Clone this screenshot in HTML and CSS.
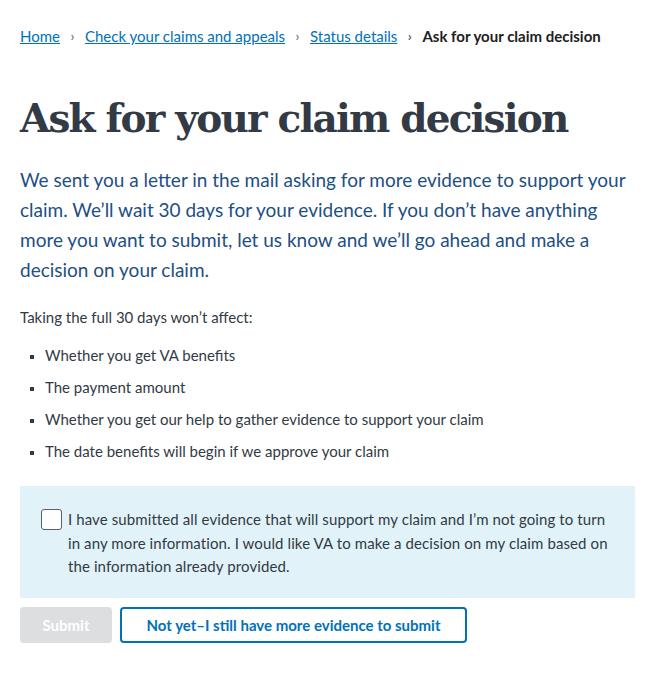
FILE: index.html
```html
<!DOCTYPE html>
<html lang="en">
<head>
<meta charset="utf-8">
<title>Ask for your claim decision</title>
<link rel="stylesheet" href="styles.css">
</head>
<body>
<main class="page">
  <nav class="breadcrumbs" aria-label="Breadcrumb">
    <ol class="crumb-list">
      <li class="crumb"><a href="#">Home</a></li>
      <li class="crumb"><a href="#">Check your claims and appeals</a></li>
      <li class="crumb"><a href="#">Status details</a></li>
      <li class="crumb current">Ask for your claim decision</li>
    </ol>
  </nav>
  <h1 class="title">Ask for your claim decision</h1>
  <p class="intro">We sent you a letter in the mail asking for more evidence to support your claim. We’ll wait 30 days for your evidence. If you don’t have anything more you want to submit, let us know and we’ll go ahead and make a decision on your claim.</p>
  <p class="body-text">Taking the full 30 days won’t affect:</p>
  <ul class="bullets">
    <li>Whether you get VA benefits</li>
    <li>The payment amount</li>
    <li>Whether you get our help to gather evidence to support your claim</li>
    <li>The date benefits will begin if we approve your claim</li>
  </ul>
  <div class="confirm-box">
    <label class="check-row">
      <span class="checkbox"></span>
      <span class="check-label">I have submitted all evidence that will support my claim and I’m not going to turn in any more information. I would like VA to make a decision on my claim based on the information already provided.</span>
    </label>
  </div>
  <div class="actions">
    <button class="btn btn-disabled" disabled>Submit</button>
    <button class="btn btn-outline">Not yet–I still have more evidence to submit</button>
  </div>
</main>
</body>
</html>
```

FILE: styles.css
```css
* { box-sizing: border-box; }
html, body { margin: 0; padding: 0; background: #fff; }
body {
  font-family: "Lato", "Liberation Sans", sans-serif;
  color: #323a45;
  font-size: 15px;
}
.page {
  padding: 24px 20px 20px 20px;
}
.crumb-list {
  list-style: none;
  margin: 0;
  padding: 0;
  display: flex;
  flex-wrap: wrap;
  line-height: 24px;
  font-size: 15px;
}
.crumb { display: flex; align-items: center; }
.crumb + .crumb::before {
  content: "›";
  color: #5b616b;
  margin: 0 10.5px;
  font-size: 14px;
}
.crumb a { color: #0071bb; text-decoration: underline; }
.crumb.current { font-weight: 700; color: #212121; }
.title {
  font-family: "DejaVu Serif", "Liberation Serif", serif;
  font-weight: 700;
  font-size: 39px;
  letter-spacing: -1.8px;
  line-height: 48px;
  color: #323a45;
  margin: 46px 0 0 0;
}
.intro {
  font-size: 19px;
  line-height: 30px;
  color: #1d4f84;
  margin: 23px 0 0 0;
}
.body-text {
  margin: 20px 0 0 0;
  line-height: 24px;
}
.bullets {
  margin: 14px 0 0 0;
  padding: 0 0 0 25px;
  list-style: square;
}
.bullets li { line-height: 24px; margin-bottom: 8px; }
.bullets li:last-child { margin-bottom: 0; }
.bullets li::marker { font-size: 12px; }
.confirm-box {
  margin-top: 23px;
  background: #e1f3f8;
  padding: 22px 20px 19px 21px;
}
.check-row { display: flex; gap: 6px; align-items: flex-start; }
.checkbox {
  flex: none;
  width: 21px;
  height: 21px;
  border: 1px solid #5b616b;
  border-radius: 3px;
  background: #fff;
  margin-top: 1px;
}
.check-label { line-height: 23.5px; letter-spacing: 0.1px; }
.actions {
  display: flex;
  gap: 8px;
  margin-top: 9px;
}
.btn {
  font-family: inherit;
  font-size: 15px;
  font-weight: 700;
  height: 36px;
  border-radius: 4px;
  padding: 0;
  white-space: nowrap;
}
.btn-disabled {
  background: #dcdee0;
  color: #fff;
  border: none;
  width: 92px;
}
.btn-outline {
  background: #fff;
  color: #0071bb;
  border: 2px solid #0071bb;
  width: 347px;
}
```
